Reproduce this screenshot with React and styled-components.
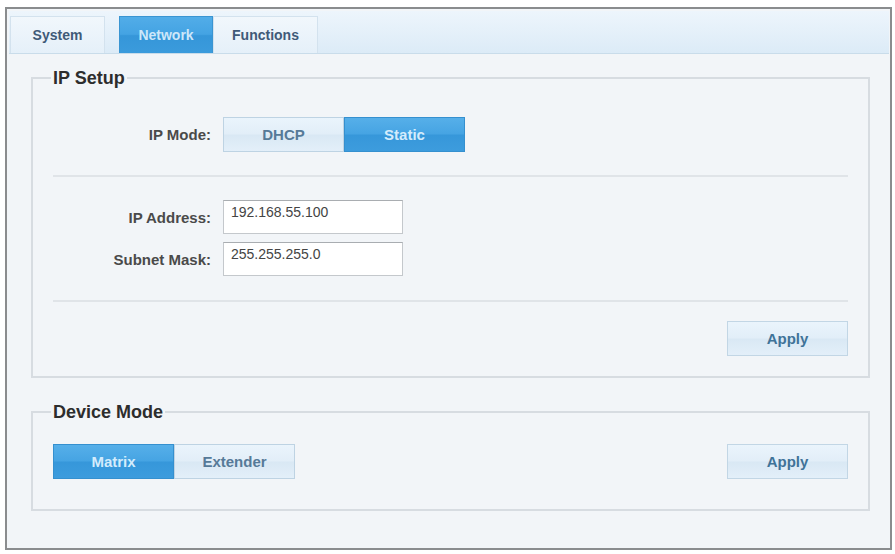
import React, { useState } from "react";
import styled, { createGlobalStyle } from "styled-components";

const GlobalStyle = createGlobalStyle`
  html, body {
    margin: 0;
    padding: 0;
    background: #ffffff;
    font-family: "Liberation Sans", Arial, sans-serif;
  }
`;

const Frame = styled.div`
  margin: 7px 0 0 5px;
  width: 887px;
  height: 543px;
  box-sizing: border-box;
  border: 2px solid #8a8c8e;
  background: #f2f5f8;
  display: flex;
  flex-direction: column;
`;

const TabBar = styled.div`
  margin: 2px 1px 0 2px;
  height: 43px;
  box-sizing: border-box;
  display: flex;
  align-items: flex-end;
  padding-left: 1px;
  background: linear-gradient(#edf5fc, #dcebf7);
  border-bottom: 1px solid #c9dcea;
`;

const Tab = styled.div`
  width: ${(p) => p.w}px;
  height: 37px;
  box-sizing: border-box;
  margin-right: ${(p) => p.gap || 0}px;
  display: flex;
  align-items: center;
  justify-content: center;
  font-size: 14px;
  font-weight: bold;
  cursor: pointer;
  color: ${(p) => (p.active ? "#cde7f9" : "#3f5a78")};
  border: 1px solid ${(p) => (p.active ? "#3a95d2" : "#d3e2ee")};
  border-bottom: none;
  background: ${(p) =>
    p.active
      ? "linear-gradient(#52ade8 0%, #44a3e3 48%, #3596d9 52%, #3b9bdc 100%)"
      : "linear-gradient(#f1f7fc, #e5f0f9)"};
`;

const Content = styled.div`
  flex: 1;
  padding: 14px 20px 0 24px;
  display: flex;
  flex-direction: column;
  gap: 24px;
`;

const Group = styled.fieldset`
  margin: 0;
  padding: ${(p) => p.pad};
  border: 2px solid #d7dce1;
  border-radius: 0;
  min-width: 0;
`;

const Legend = styled.legend`
  margin-left: -2px;
  padding: 0 2px;
  font-size: 18px;
  font-weight: bold;
  color: #2d2d2d;
  line-height: 20px;
`;

const Row = styled.div`
  display: flex;
  align-items: center;
  gap: 12px;
  margin-top: ${(p) => p.mt || 0}px;
`;

const Label = styled.div`
  width: 158px;
  text-align: right;
  font-size: 15px;
  font-weight: bold;
  color: #4a4a4a;
`;

const Divider = styled.div`
  height: 2px;
  background: #e0e4e8;
  margin: ${(p) => p.m};
`;

const Segmented = styled.div`
  display: flex;
`;

const SegButton = styled.div`
  width: 121px;
  height: 35px;
  box-sizing: border-box;
  display: flex;
  align-items: center;
  justify-content: center;
  font-size: 15px;
  font-weight: bold;
  cursor: pointer;
  color: ${(p) => (p.active ? "#d4ecfc" : "#567a98")};
  border: 1px solid ${(p) => (p.active ? "#3590cf" : "#bed3e3")};
  background: ${(p) =>
    p.active
      ? "linear-gradient(#56afe9 0%, #46a4e3 48%, #3697da 52%, #3d9cdd 100%)"
      : "linear-gradient(#eaf4fc 0%, #e2eef8 48%, #d9e8f4 52%, #e3eff9 100%)"};
`;

const Input = styled.input`
  width: 180px;
  height: 34px;
  box-sizing: border-box;
  border: 1px solid #c4c8cc;
  border-top-color: #a9adb1;
  background: #ffffff;
  padding: 0 6px 10px 7px;
  font-family: "Liberation Sans", Arial, sans-serif;
  font-size: 14px;
  color: #444;
  outline: none;
`;

const Actions = styled.div`
  display: flex;
  justify-content: flex-end;
  align-items: center;
`;

const ApplyButton = styled(SegButton)`
  color: #3f7398;
  border-color: #c2d6e5;
`;

const DeviceRow = styled.div`
  display: flex;
  justify-content: space-between;
  align-items: center;
`;

export default function App() {
  const [tab, setTab] = useState("Network");
  const [ipMode, setIpMode] = useState("Static");
  const [deviceMode, setDeviceMode] = useState("Matrix");
  const [ip, setIp] = useState("192.168.55.100");
  const [mask, setMask] = useState("255.255.255.0");

  const tabs = [
    { name: "System", w: 95, gap: 14 },
    { name: "Network", w: 94 },
    { name: "Functions", w: 105 },
  ];

  return (
    <>
      <GlobalStyle />
      <Frame>
        <TabBar>
          {tabs.map((t) => (
            <Tab
              key={t.name}
              w={t.w}
              gap={t.gap}
              active={tab === t.name}
              onClick={() => setTab(t.name)}
            >
              {t.name}
            </Tab>
          ))}
        </TabBar>

        <Content>
          <Group pad="0 20px 20px">
            <Legend>IP Setup</Legend>
            <Row mt={29}>
              <Label>IP Mode:</Label>
              <Segmented>
                {["DHCP", "Static"].map((m) => (
                  <SegButton
                    key={m}
                    active={ipMode === m}
                    onClick={() => setIpMode(m)}
                  >
                    {m}
                  </SegButton>
                ))}
              </Segmented>
            </Row>
            <Divider m="23px 0 23px" />
            <Row>
              <Label>IP Address:</Label>
              <Input value={ip} onChange={(e) => setIp(e.target.value)} />
            </Row>
            <Row mt={8}>
              <Label>Subnet Mask:</Label>
              <Input value={mask} onChange={(e) => setMask(e.target.value)} />
            </Row>
            <Divider m="24px 0 19px" />
            <Actions>
              <ApplyButton>Apply</ApplyButton>
            </Actions>
          </Group>

          <Group pad="22px 20px 30px">
            <Legend>Device Mode</Legend>
            <DeviceRow>
              <Segmented>
                {["Matrix", "Extender"].map((m) => (
                  <SegButton
                    key={m}
                    active={deviceMode === m}
                    onClick={() => setDeviceMode(m)}
                  >
                    {m}
                  </SegButton>
                ))}
              </Segmented>
              <ApplyButton>Apply</ApplyButton>
            </DeviceRow>
          </Group>
        </Content>
      </Frame>
    </>
  );
}
